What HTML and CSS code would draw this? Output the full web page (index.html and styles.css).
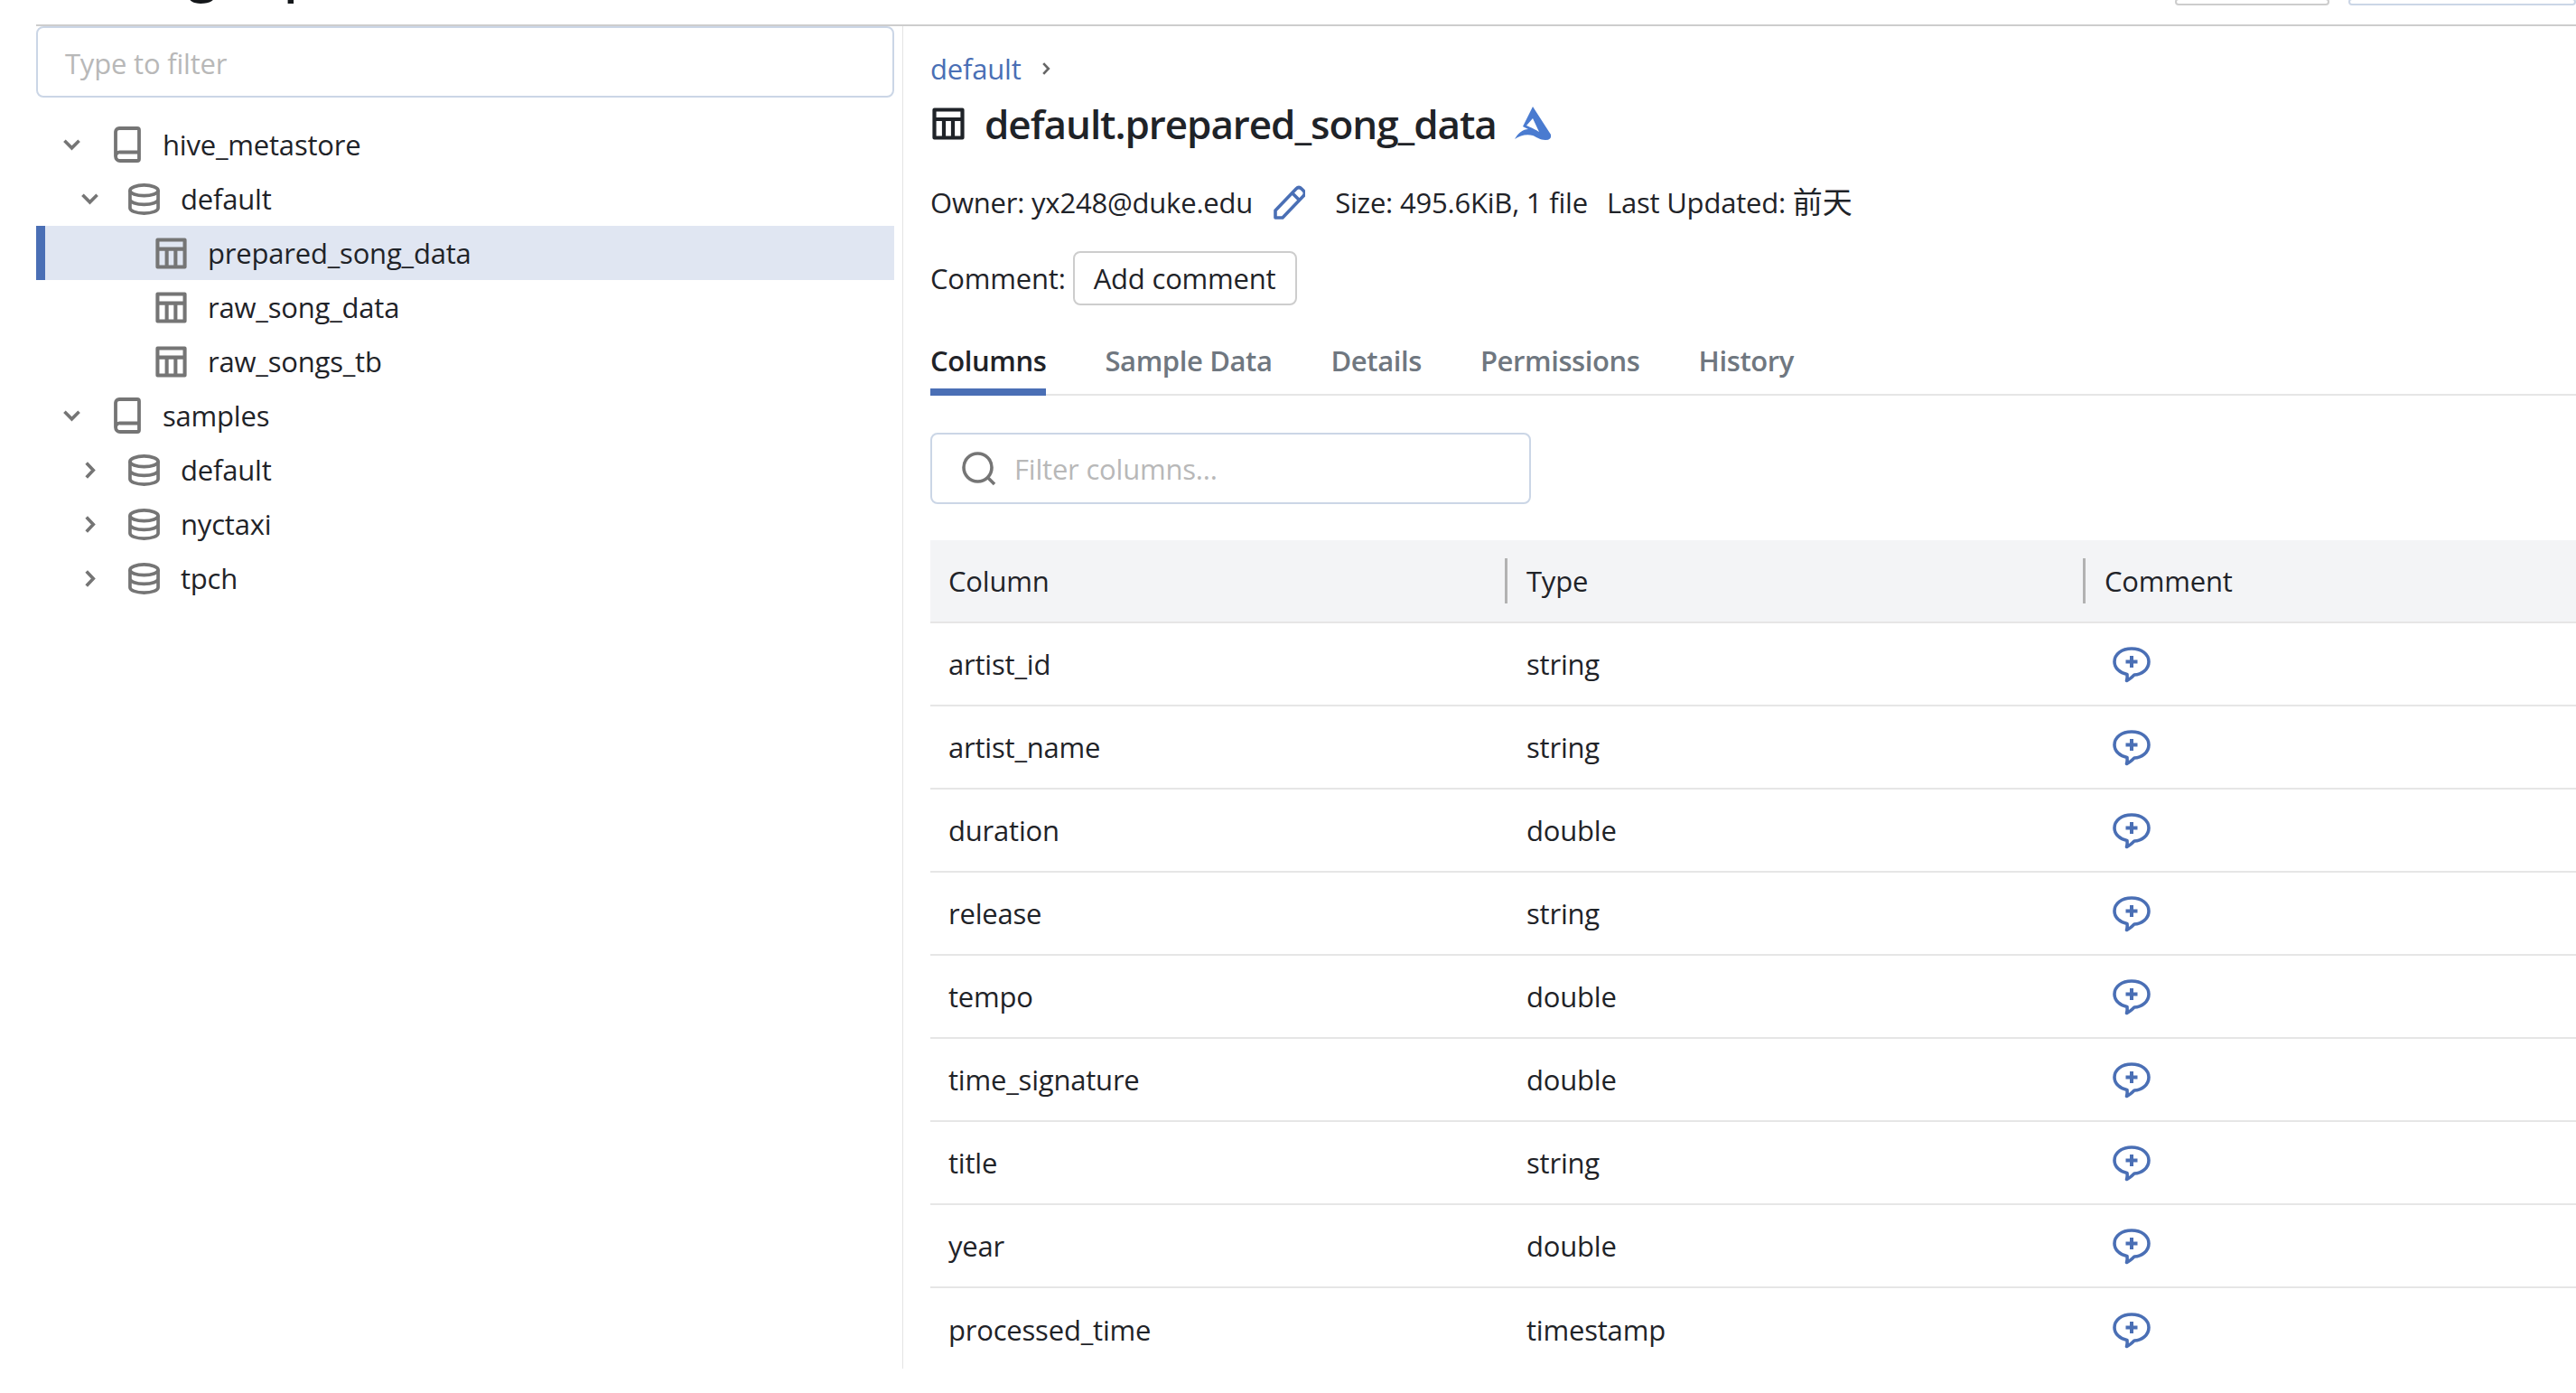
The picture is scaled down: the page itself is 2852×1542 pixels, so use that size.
FILE: index.html
```html
<!DOCTYPE html>
<html lang="en">
	<head>
		<meta charset="UTF-8">
		<meta name="viewport" content="width=device-width, initial-scale=1.0">
		<title>Catalog Explorer</title>
		<link rel="stylesheet" href="styles.css">
	</head>
	<body>
		<svg class="sprites" width="0" height="0">
			<symbol id="i-down" viewBox="0 0 20 20"><path d="M1.500 5l8.500 8.500L18.500 5" fill="none" stroke="currentColor" stroke-width="3.800"/></symbol>
			<symbol id="i-right" viewBox="0 0 20 20"><path d="M6 1.500l8 8.500-8 8.500" fill="none" stroke="currentColor" stroke-width="3.800"/></symbol>
			<symbol id="i-book" viewBox="0 0 30 40"><path d="M6 2h20a2 2 0 0 1 2 2v32a2 2 0 0 1-2 2H7a5 5 0 0 1-5-5V6a4 4 0 0 1 4-4zM2 33a4.500 4.500 0 0 1 5-4.500h21" fill="none" stroke="currentColor" stroke-width="3.800"/></symbol>
			<symbol id="i-db" viewBox="0 0 36 36"><g fill="none" stroke="currentColor" stroke-width="3.800"><ellipse cx="18" cy="8" rx="16" ry="6"/><path d="M2 8v20c0 3.400 7 6 16 6s16-2.600 16-6V8M2 18c0 3.400 7 6 16 6s16-2.600 16-6"/></g></symbol>
			<symbol id="i-table" viewBox="0 0 36 36"><path d="M2.500 2.500h31v31h-31zM2.500 13h31M13 13v20M23 13v20" fill="none" stroke="currentColor" stroke-width="4.200" stroke-linejoin="round"/></symbol>
			<symbol id="i-comment" viewBox="0 0 42 40"><path d="M21 2c11 0 19 6 19 14.500S32 31 24 31c-2.500 2.500-5 5-8.500 6.500 .8-2.500 .8-5 .5-7C8 29 2 23.500 2 16.500 2 8 10 2 21 2z" fill="none" stroke="currentColor" stroke-width="3.600" stroke-linejoin="round"/><path d="M21 10v13M14.500 16.500h13" fill="none" stroke="currentColor" stroke-width="4"/></symbol>
		</svg>

		<div class="top-bar">
			<h1 class="page-title">Catalog Explorer</h1>
			<div class="top-actions">
				<div class="top-btn"></div>
				<div class="top-btn top-btn-wide"></div>
			</div>
		</div>

		<div class="main">
			<aside class="sidebar">
				<div class="input tree-filter"><span class="placeholder">Type to filter</span></div>
				<ul class="tree">
					<li class="node lvl-0"><svg class="chev"><use href="#i-down"/></svg><svg class="ico-book"><use href="#i-book"/></svg><span>hive_metastore</span></li>
					<li class="node lvl-1"><svg class="chev"><use href="#i-down"/></svg><svg class="ico-db"><use href="#i-db"/></svg><span>default</span></li>
					<li class="node lvl-2 selected"><svg class="ico-table"><use href="#i-table"/></svg><span>prepared_song_data</span></li>
					<li class="node lvl-2"><svg class="ico-table"><use href="#i-table"/></svg><span>raw_song_data</span></li>
					<li class="node lvl-2"><svg class="ico-table"><use href="#i-table"/></svg><span>raw_songs_tb</span></li>
					<li class="node lvl-0"><svg class="chev"><use href="#i-down"/></svg><svg class="ico-book"><use href="#i-book"/></svg><span>samples</span></li>
					<li class="node lvl-1"><svg class="chev"><use href="#i-right"/></svg><svg class="ico-db"><use href="#i-db"/></svg><span>default</span></li>
					<li class="node lvl-1"><svg class="chev"><use href="#i-right"/></svg><svg class="ico-db"><use href="#i-db"/></svg><span>nyctaxi</span></li>
					<li class="node lvl-1"><svg class="chev"><use href="#i-right"/></svg><svg class="ico-db"><use href="#i-db"/></svg><span>tpch</span></li>
				</ul>
			</aside>

			<section class="detail">
				<div class="crumbs"><a class="crumb-link">default</a><svg class="crumb-sep"><use href="#i-right"/></svg></div>
				<div class="heading">
					<svg class="heading-table"><use href="#i-table"/></svg>
					<h2>default.prepared_song_data</h2>
					<svg class="delta" viewBox="0 0 41 38">
						<path fill-rule="evenodd" d="M20 0L40 31Q41 37 34 37C28 37 25 34 20 32C13 30 6 32 0 36C4 29 9 25 15 25L9 22ZM20 13L27 28C24 26 18 23 13 21Z" fill="#4a7bd0"/>
					</svg>
				</div>
				<div class="meta">
					<span>Owner: yx248@duke.edu</span>
					<svg class="pencil" viewBox="0 0 36 38"><path d="M3 28L26 4Q29 1 32 4L34 6Q37 9 34 12L11 36L3 36ZM22 9L30 17" fill="none" stroke="#4a6fb5" stroke-width="3.600" stroke-linejoin="round"/></svg>
					<span class="meta-size">Size: 495.6KiB, 1 file</span>
					<span class="meta-updated">Last Updated: <span class="cjk">前天</span></span>
				</div>
				<div class="comment-row">
					<span>Comment:</span>
					<button class="btn">Add comment</button>
				</div>
				<div class="tabs">
					<div class="tab active">Columns</div>
					<div class="tab">Sample Data</div>
					<div class="tab">Details</div>
					<div class="tab">Permissions</div>
					<div class="tab">History</div>
				</div>
				<div class="input column-filter">
					<svg class="search" viewBox="0 0 38 38"><circle cx="17.500" cy="17.500" r="15.500" fill="none" stroke="currentColor" stroke-width="3.600"/><path d="M28 28l8 8" stroke="currentColor" stroke-width="3.600"/></svg>
					<span class="placeholder">Filter columns...</span>
				</div>
				<div class="table">
					<div class="row head">
						<div class="cell">Column</div>
						<div class="cell">Type</div>
						<div class="cell">Comment</div>
					</div>
					<div class="row"><div class="cell">artist_id</div><div class="cell">string</div><div class="cell"><svg class="add"><use href="#i-comment"/></svg></div></div>
					<div class="row"><div class="cell">artist_name</div><div class="cell">string</div><div class="cell"><svg class="add"><use href="#i-comment"/></svg></div></div>
					<div class="row"><div class="cell">duration</div><div class="cell">double</div><div class="cell"><svg class="add"><use href="#i-comment"/></svg></div></div>
					<div class="row"><div class="cell">release</div><div class="cell">string</div><div class="cell"><svg class="add"><use href="#i-comment"/></svg></div></div>
					<div class="row"><div class="cell">tempo</div><div class="cell">double</div><div class="cell"><svg class="add"><use href="#i-comment"/></svg></div></div>
					<div class="row"><div class="cell">time_signature</div><div class="cell">double</div><div class="cell"><svg class="add"><use href="#i-comment"/></svg></div></div>
					<div class="row"><div class="cell">title</div><div class="cell">string</div><div class="cell"><svg class="add"><use href="#i-comment"/></svg></div></div>
					<div class="row"><div class="cell">year</div><div class="cell">double</div><div class="cell"><svg class="add"><use href="#i-comment"/></svg></div></div>
					<div class="row last"><div class="cell">processed_time</div><div class="cell">timestamp</div><div class="cell"><svg class="add"><use href="#i-comment"/></svg></div></div>
				</div>
			</section>
		</div>
	</body>
</html>
```

FILE: styles.css
```css
html, body
{
	margin: 0;
	height: 100%;
	overflow: hidden;
	background-color: #fff;
}
body
{
	font-family: "Open Sans", "Noto Sans CJK SC", sans-serif;
	font-size: 31px;
	letter-spacing: -0.2px;
	color: #1f2328;
}
svg
{
	flex: none;
	display: block;
}
.sprites
{
	display: none;
}

/* top bar, cut off by the window */
.top-bar
{
	height: 27px;
	margin-left: 40px;
	display: flex;
	justify-content: space-between;
	align-items: flex-end;
	overflow: hidden;
	border-bottom: 2px solid #cdcdcd;
}
.page-title
{
	margin: 0 0 28px 0;
	font-size: 56px;
	line-height: 60px;
	font-weight: 600;
	letter-spacing: -0.6px;
	color: #14171a;
}
.top-actions
{
	display: flex;
	gap: 21px;
	height: 27px;
	margin-top: -1px;
	align-self: flex-start;
}
.top-btn
{
	width: 167px;
	height: 4px;
	margin-top: -1px;
	border: 2px solid #cdcdcd;
	border-radius: 6px;
}
.top-btn-wide
{
	width: 248px;
	border-color: #cbd6e6;
}

.main
{
	display: flex;
	height: 1486px;
}
.input
{
	box-sizing: border-box;
	display: flex;
	align-items: center;
	border: 2px solid #cbd6e6;
	border-radius: 8px;
}
.placeholder
{
	color: #b8b8b8;
}

/* left tree */
.sidebar
{
	box-sizing: border-box;
	width: 1000px;
	padding-left: 40px;
	padding-right: 9px;
	border-right: 1px solid #e4e4e4;
}
.tree-filter
{
	height: 79px;
	padding-left: 30px;
	padding-top: 2px;
}
.tree
{
	list-style: none;
	margin: 22px 0 0 0;
	padding: 0;
}
.node
{
	box-sizing: border-box;
	display: flex;
	align-items: center;
	height: 60px;
	color: #1f2328;
}
.lvl-0 { padding-left: 30px; }
.lvl-1 { padding-left: 50px; }
.lvl-2 { padding-left: 132px; }
.selected
{
	background-color: #e0e6f2;
	border-left: 10px solid #4a6fb5;
	padding-left: 122px;
}
.chev
{
	width: 19px;
	height: 19px;
	color: #757575;
}
.ico-book
{
	width: 30px;
	height: 40px;
	margin-left: 37px;
	margin-right: 24px;
	color: #757575;
}
.ico-db
{
	width: 35px;
	height: 35px;
	margin-left: 33px;
	margin-right: 23px;
	color: #757575;
}
.ico-table
{
	width: 35px;
	height: 35px;
	margin-right: 23px;
	color: #757575;
}

/* right detail */
.detail
{
	flex: 1;
	min-width: 0;
	padding-left: 30px;
}
.crumbs
{
	display: flex;
	align-items: center;
	height: 42px;
	margin-top: 26px;
}
.crumb-link
{
	color: #4a6fb5;
}
.crumb-sep
{
	width: 14px;
	height: 14px;
	margin-left: 20px;
	color: #666;
}
.heading
{
	display: flex;
	align-items: center;
	height: 62px;
	margin-top: 9px;
}
.heading h2
{
	margin: 0 0 0 22px;
	font-size: 44px;
	font-weight: 600;
	letter-spacing: -1.05px;
	color: #1f2328;
}
.heading-table
{
	width: 36px;
	height: 36px;
	margin-left: 2px;
	color: #1f2328;
}
.delta
{
	width: 41px;
	height: 38px;
	margin-left: 20px;
}
.meta
{
	display: flex;
	align-items: center;
	height: 40px;
	line-height: 40px;
	margin-top: 36px;
}
.pencil
{
	width: 36px;
	height: 38px;
	margin-left: 22px;
}
.meta-size
{
	margin-left: 33px;
}
.meta-updated
{
	margin-left: 21px;
}
.cjk
{
	font-size: 33px;
	letter-spacing: 0;
}
.comment-row
{
	display: flex;
	align-items: center;
	gap: 8px;
	height: 60px;
	margin-top: 34px;
}
.btn
{
	box-sizing: border-box;
	width: 248px;
	height: 60px;
	padding: 0;
	background-color: #fff;
	border: 2px solid #cdcdcd;
	border-radius: 8px;
	font: inherit;
	letter-spacing: inherit;
	color: inherit;
}
.tabs
{
	display: flex;
	gap: 65px;
	height: 65px;
	margin-top: 33px;
	border-bottom: 2px solid #e6e6e6;
}
.tab
{
	box-sizing: border-box;
	height: 67px;
	padding-top: 7px;
	color: #6f7780;
	font-weight: 600;
	letter-spacing: -0.4px;
}
.tab.active
{
	color: #1f2328;
	border-bottom: 8px solid #4a6fb5;
}
.column-filter
{
	width: 665px;
	height: 79px;
	margin-top: 41px;
	padding-left: 33px;
}
.search
{
	width: 38px;
	height: 38px;
	margin-right: 20px;
	color: #757575;
}

/* columns table */
.table
{
	margin-top: 40px;
}
.row
{
	box-sizing: border-box;
	display: grid;
	grid-template-columns: 639px 640px 1fr;
	align-items: center;
	height: 92px;
	border-bottom: 2px solid #e6e6e6;
}
.row.last
{
	border-bottom: none;
}
.row.head
{
	background-color: #f3f4f6;
}
.cell
{
	padding-left: 20px;
}
.cell + .cell
{
	padding-left: 21px;
}
.head .cell
{
	box-sizing: border-box;
	display: flex;
	align-items: center;
	height: 50px;
}
.head .cell + .cell
{
	border-left: 3px solid #b2b2b2;
	margin-left: -3px;
	padding-left: 21px;
}
.add
{
	width: 42px;
	height: 40px;
	margin-top: 2px;
	margin-left: 9px;
	color: #4a6fb5;
}
```
